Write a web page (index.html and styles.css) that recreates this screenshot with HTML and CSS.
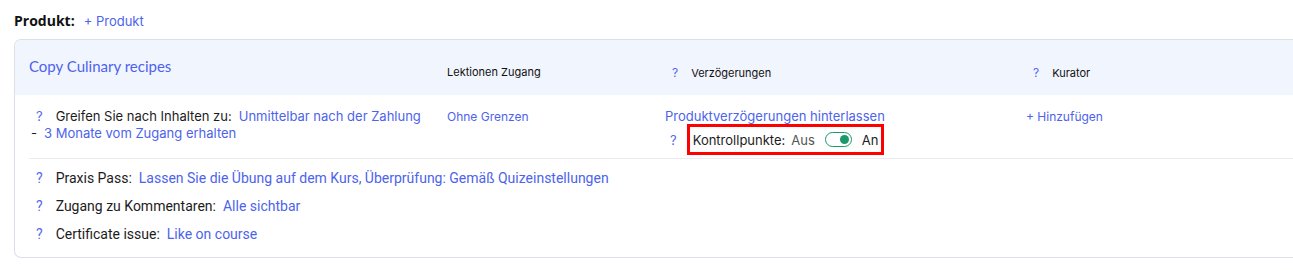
FILE: index.html
```html
<!DOCTYPE html>
<html lang="de">
<head>
  <meta charset="UTF-8">
  <title>Produkt</title>
  <link rel="stylesheet" href="styles.css">
</head>
<body>

  <div class="product-head">
    <span class="product-label">Produkt:</span>
    <a class="link add-product">+ Produkt</a>
  </div>

  <div class="card">
    <div class="card-header">
      <div class="course-title">Copy Culinary recipes</div>
      <div class="col-label">Lektionen Zugang</div>
      <div class="col-label"><span class="hint">?</span>Verzögerungen</div>
      <div class="col-label"><span class="hint">?</span>Kurator</div>
    </div>

    <div class="card-row">
      <div class="cell">
        <div class="line"><span class="hint">?</span>Greifen Sie nach Inhalten zu:<a class="link value">Unmittelbar nach der Zahlung</a></div>
        <div class="line dash">-<a class="link value">3 Monate vom Zugang erhalten</a></div>
      </div>
      <div class="cell"><a class="link small">Ohne Grenzen</a></div>
      <div class="cell">
        <a class="link">Produktverzögerungen hinterlassen</a>
        <div class="checkpoints">
          <span class="hint">?</span>
          <div class="highlight">
            Kontrollpunkte:
            <span class="off">Aus</span>
            <span class="toggle"><span class="knob"></span></span>
            <span>An</span>
          </div>
        </div>
      </div>
      <div class="cell"><a class="link small">+ Hinzufügen</a></div>
    </div>

    <div class="settings">
      <div class="setting"><span class="hint">?</span>Praxis Pass:<a class="link value">Lassen Sie die Übung auf dem Kurs, Überprüfung: Gemäß Quizeinstellungen</a></div>
      <div class="setting"><span class="hint">?</span>Zugang zu Kommentaren:<a class="link value">Alle sichtbar</a></div>
      <div class="setting"><span class="hint">?</span>Certificate issue:<a class="link value">Like on course</a></div>
    </div>
  </div>

</body>
</html>
```

FILE: styles.css
```css
body {
  margin: 0;
  padding: 11px 0 0 14px;
  font-family: Inter, sans-serif;
  font-size: 13px;
  color: #1c1c1c;
  background-color: #fff;
  overflow: hidden;
}

.link {
  color: #4d63ec;
  cursor: pointer;
}

.link.small {
  font-size: 12px;
}

.hint {
  color: #5269f0;
  margin-right: 13px;
}

.product-head {
  display: flex;
  align-items: baseline;
  gap: 9px;
  height: 20px;
}

.product-label {
  font-family: "Open Sans", sans-serif;
  font-weight: 700;
  font-size: 14px;
  color: #111;
}

.add-product {
  font-size: 13px;
}

.card {
  margin-top: 8px;
  width: 1300px;
  border: 1px solid #dcdfe8;
  border-right: none;
  border-radius: 7px 0 0 7px;
  overflow: hidden;
}

.card-header,
.card-row {
  display: grid;
  grid-template-columns: 418px 218px 361px 1fr;
  padding-left: 14px;
}

.card-header {
  background-color: #f1f5fe;
  height: 55px;
}

.course-title {
  font-family: Lato, sans-serif;
  font-size: 15px;
  color: #4d63ec;
  padding-top: 17px;
}

.col-label {
  font-size: 11px;
  color: #111;
  padding-top: 25px;
}

.col-label .hint {
  font-size: 12px;
  margin-left: 7px;
}

.card-row {
  padding-top: 13px;
  height: 51px;
  position: relative;
}

.card-row::after {
  content: "";
  position: absolute;
  left: 14px;
  right: 0;
  bottom: 0;
  border-bottom: 1px solid #e9ebf0;
}

.line {
  padding-left: 7px;
  height: 17px;
}

.line.dash {
  padding-left: 2px;
}

.line .value,
.setting .value {
  margin-left: 7px;
}

.checkpoints {
  display: flex;
  align-items: center;
  margin-top: 0;
  padding-left: 5px;
}

.checkpoints .hint {
  margin-right: 10px;
}

.highlight {
  display: flex;
  align-items: center;
  gap: 6px;
  border: 3px solid #f00;
  padding: 2px 3px;
  height: 21px;
}

.off {
  color: #555;
}

.toggle {
  display: inline-block;
  box-sizing: border-box;
  width: 27px;
  height: 15px;
  border: 1px solid #1a9a6a;
  border-radius: 8px;
  position: relative;
  margin: 0 4px 0 4px;
}

.knob {
  position: absolute;
  right: 2px;
  top: 2px;
  width: 9px;
  height: 9px;
  border-radius: 50%;
  background-color: #1a9a6a;
}

.settings {
  padding: 11px 0 3px 21px;
  font-family: Roboto, sans-serif;
  font-size: 14px;
}

.setting {
  height: 28px;
}
```
